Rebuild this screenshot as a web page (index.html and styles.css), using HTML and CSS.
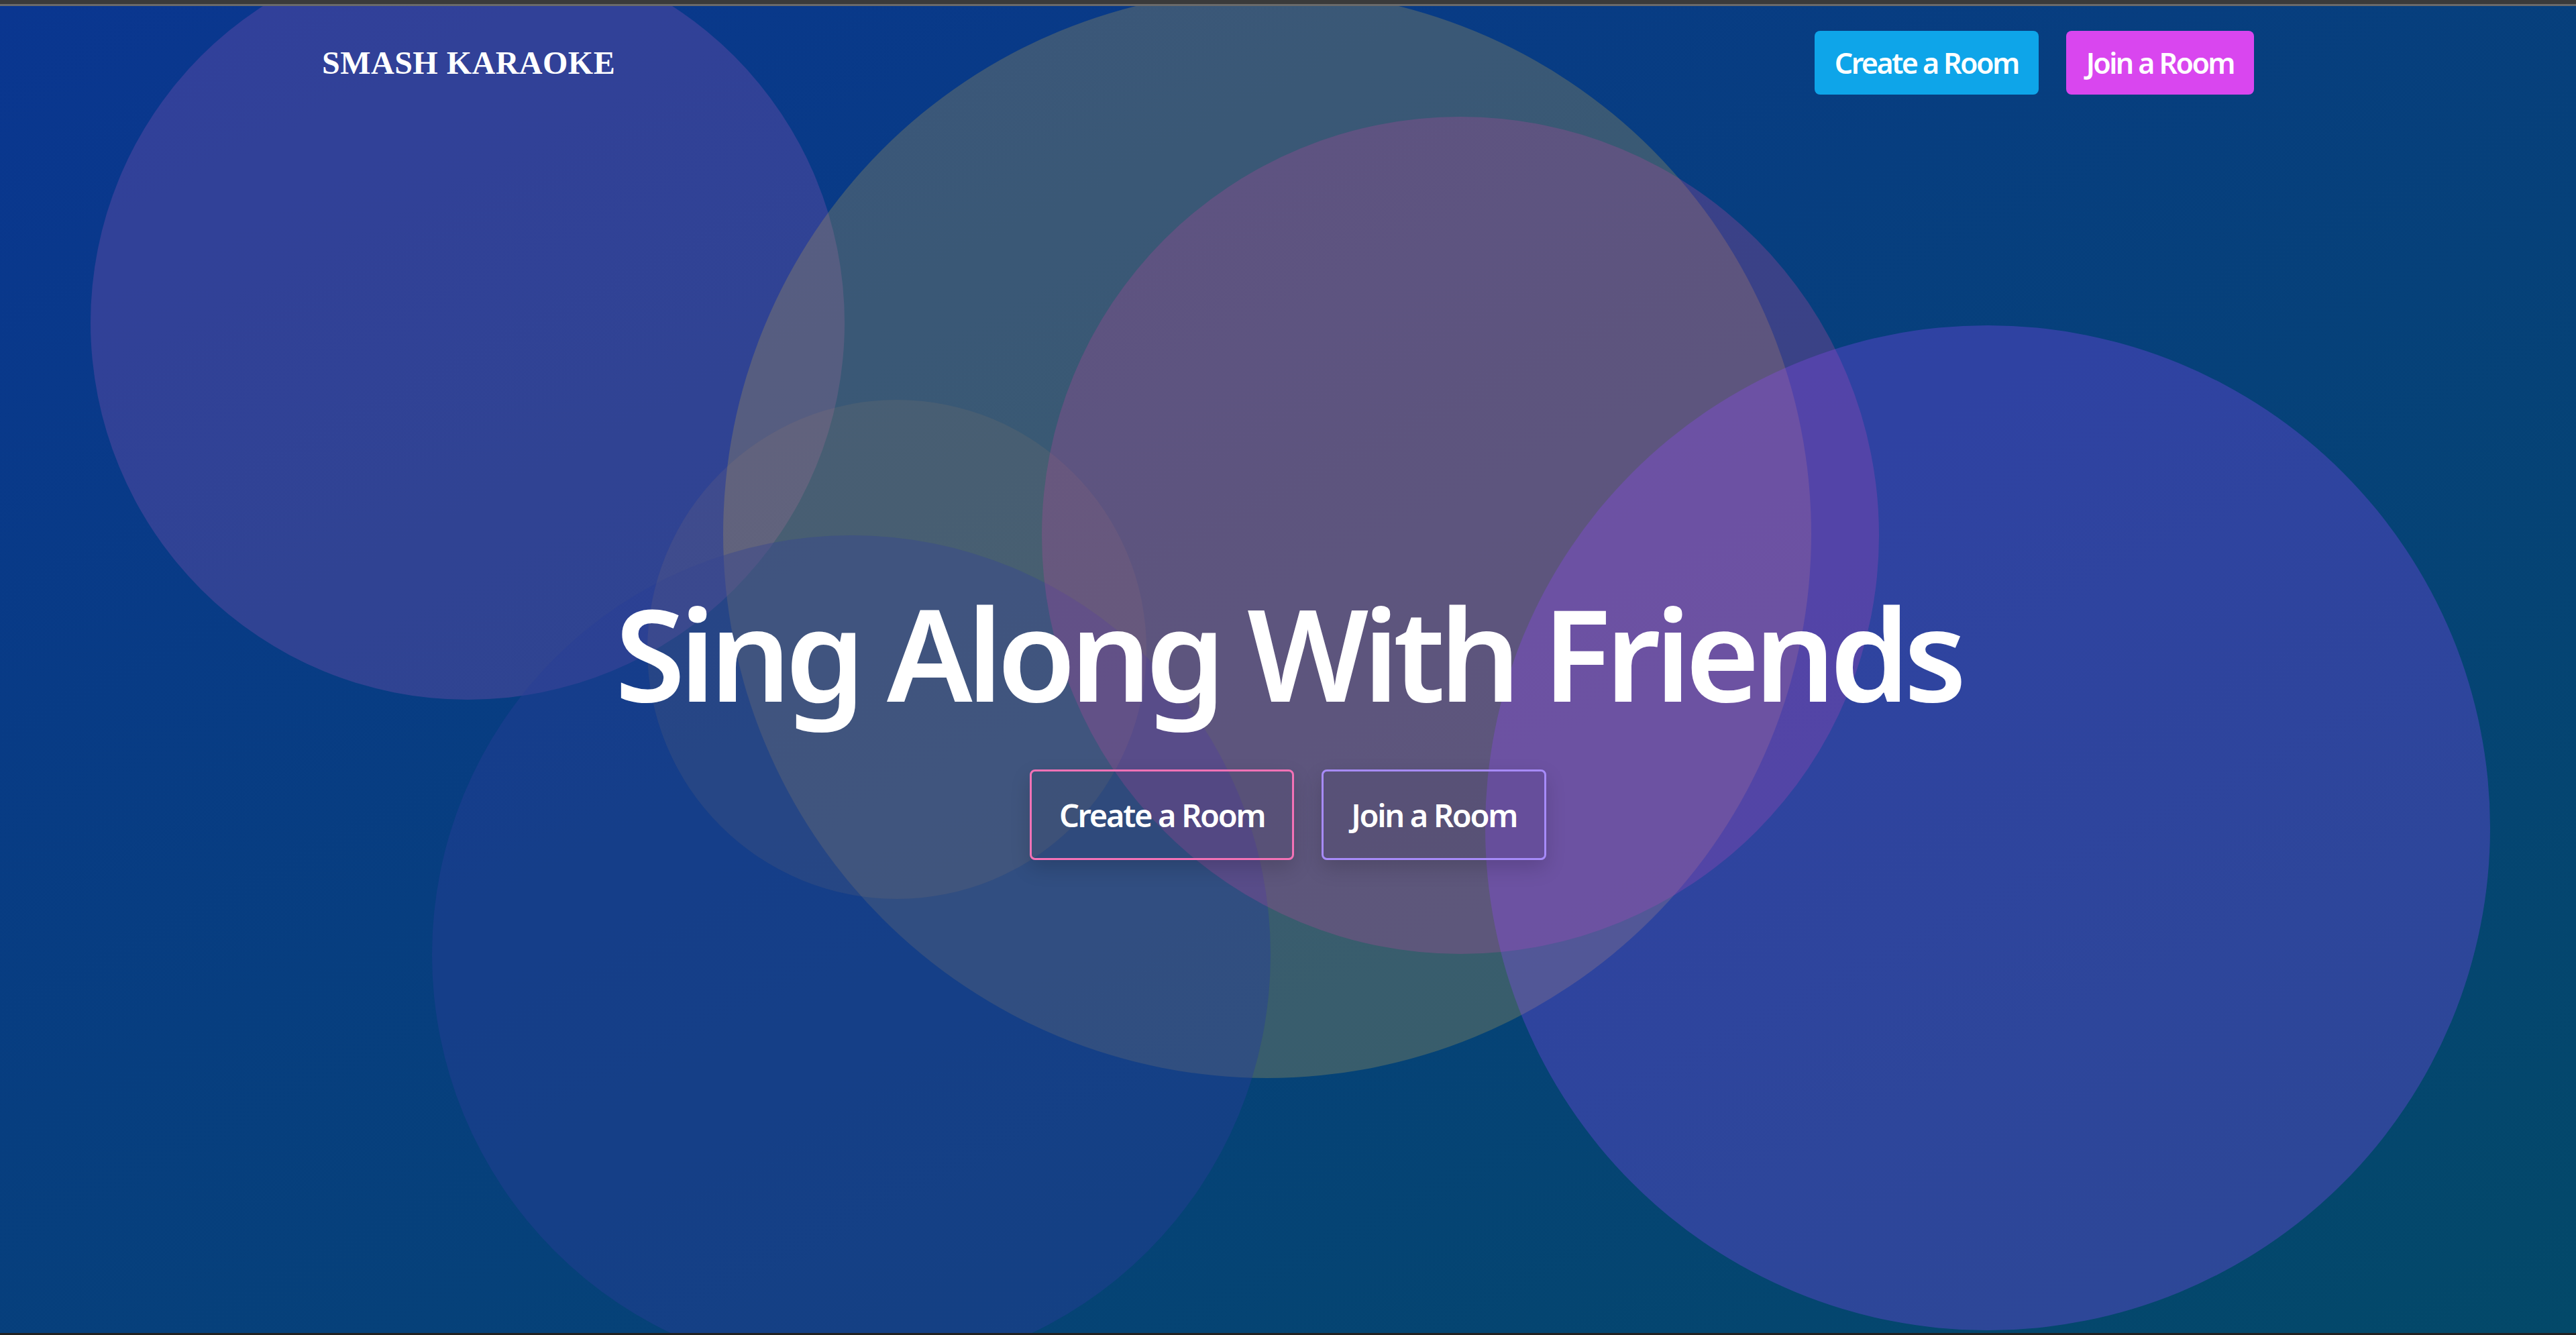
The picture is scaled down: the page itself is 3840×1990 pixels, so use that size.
FILE: index.html
```html
<!DOCTYPE html>
<html lang="en">
<head>
<meta charset="utf-8">
<title>Smash Karaoke</title>
<link rel="stylesheet" href="styles.css">
</head>
<body>
<div class="frame">
  <div class="topbar"></div>
  <main class="hero">
    <div class="blobs" aria-hidden="true">
      <span class="blob blob-1"></span>
      <span class="blob blob-2"></span>
      <span class="blob blob-6"></span>
      <span class="blob blob-5"></span>
      <span class="blob blob-3"></span>
      <span class="blob blob-4"></span>
    </div>
    <header class="nav">
      <div class="logo">SMASH KARAOKE</div>
      <div class="nav-actions">
        <a class="btn btn-create">Create a Room</a>
        <a class="btn btn-join">Join a Room</a>
      </div>
    </header>
    <section class="hero-content">
      <h1 class="title">Sing Along With Friends</h1>
      <div class="hero-actions">
        <a class="cta cta-create">Create a Room</a>
        <a class="cta cta-join">Join a Room</a>
      </div>
    </section>
  </main>
  <div class="bottombar"></div>
</div>
</body>
</html>
```

FILE: styles.css
```css
* { box-sizing: border-box; }
html, body { margin: 0; padding: 0; }
body {
  background: #222;
  font-family: "Noto Sans", "Open Sans", sans-serif;
  color: #fff;
}
.frame {
  width: 3840px;
  height: 1990px;
  display: flex;
  flex-direction: column;
}
.topbar {
  height: 9px;
  background: #3a3a3a;
  border-bottom: 3px solid #6a6a6a;
  flex: none;
}
.bottombar {
  height: 3px;
  background: #222;
  flex: none;
}
.hero {
  position: relative;
  flex: 1;
  overflow: hidden;
  background: linear-gradient(to bottom right, #0a3690, #034969);
}
.blobs { position: absolute; inset: 0; }
.blob {
  position: absolute;
  border-radius: 50%;
}
.blob-1 { left: 135px; top: -90px; width: 1124px; height: 1124px; background: rgba(143, 86, 182, 0.3); }
.blob-2 { left: 1078px; top: -24px; width: 1622px; height: 1622px; background: rgba(175, 156, 87, 0.3); }
.blob-3 { left: 1553px; top: 165px; width: 1248px; height: 1248px; background: rgba(180, 73, 154, 0.3); }
.blob-4 { left: 2214px; top: 476px; width: 1498px; height: 1498px; background: rgba(144, 72, 252, 0.3); }
.blob-5 { left: 965px; top: 587px; width: 744px; height: 744px; background: rgba(200, 150, 100, 0.1); }
.blob-6 { left: 644px; top: 789px; width: 1250px; height: 1250px; background: rgba(40, 62, 150, 0.45); }

.nav {
  position: relative;
  width: 2880px;
  margin: 0 auto;
  padding-top: 37px;
  display: flex;
  align-items: center;
  justify-content: space-between;
}
.logo {
  font-family: "Liberation Serif", "Times New Roman", serif;
  font-weight: 700;
  font-size: 48px;
  letter-spacing: 0.5px;
}
.nav-actions {
  display: flex;
  gap: 41px;
}
.btn {
  height: 95px;
  padding: 0 30px;
  border-radius: 8px;
  display: inline-flex;
  align-items: center;
  font-size: 43px;
  font-weight: 600;
  letter-spacing: -2.6px;
  color: #fff;
}
.btn-create { background: #0ea5e9; }
.btn-join { background: #d946ef; }

.hero-content {
  position: relative;
  text-align: center;
  margin-top: 737px;
}
.title {
  margin: 0;
  font-size: 190px;
  line-height: 1;
  font-weight: 600;
  letter-spacing: -8.5px;
}
.hero-actions {
  margin-top: 79px;
  display: flex;
  justify-content: center;
  gap: 41px;
}
.cta {
  height: 135px;
  padding: 0 41px;
  display: inline-flex;
  align-items: center;
  border: 3px solid;
  border-radius: 8px;
  font-size: 47px;
  font-weight: 600;
  letter-spacing: -2.3px;
  color: #fff;
  background: rgba(10, 20, 50, 0.06);
  box-shadow: 0 12px 30px rgba(0, 0, 0, 0.15);
}
.cta-create { border-color: #f472b6; }
.cta-join { border-color: #a78bfa; }
```
